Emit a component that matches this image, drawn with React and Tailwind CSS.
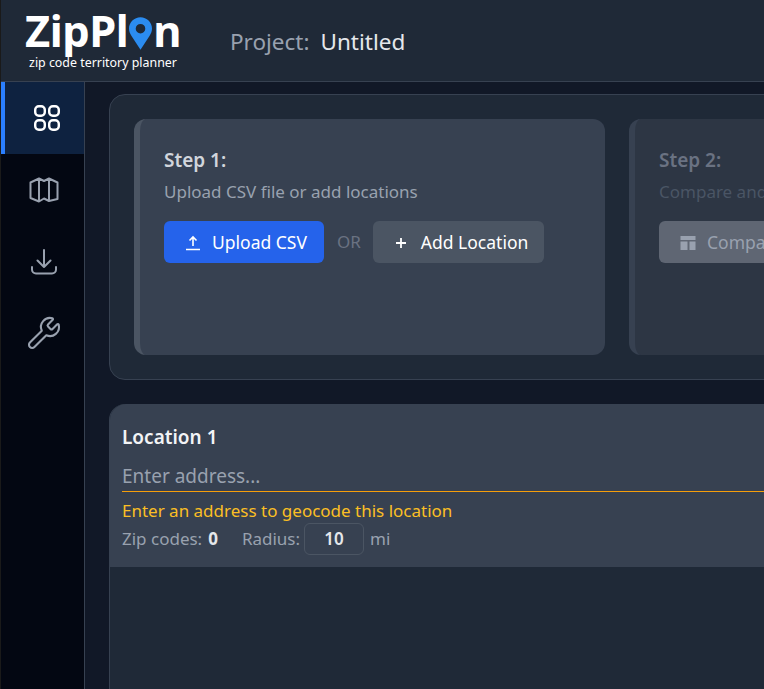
import { Wrench } from "lucide-react";

const font = { fontFamily: '"Noto Sans", "Open Sans", sans-serif' };

function GridIcon() {
  return (
    <svg viewBox="0 0 26 26" className="w-[26px] h-[26px]" fill="none" stroke="currentColor" strokeWidth="2.4">
      <rect x="1.2" y="1.2" width="9.6" height="9.6" rx="3.6" />
      <rect x="15.2" y="1.2" width="9.6" height="9.6" rx="3.6" />
      <rect x="1.2" y="15.2" width="9.6" height="9.6" rx="3.6" />
      <rect x="15.2" y="15.2" width="9.6" height="9.6" rx="3.6" />
    </svg>
  );
}

function MapIcon() {
  return (
    <svg viewBox="0 0 30 26" className="w-[30px] h-[26px]" fill="none" stroke="currentColor" strokeWidth="2" strokeLinejoin="round">
      <path d="M1.5 5.5 10 1.5l5 2.5 5-2.5 8.5 4V22L20 24l-5-2.5L10 24.5 1.5 21zM10 1.5v23M20 1.5V24" />
    </svg>
  );
}

function DownloadIcon() {
  return (
    <svg viewBox="0 0 26 26" className="w-[26px] h-[26px]" fill="none" stroke="currentColor" strokeWidth="2" strokeLinecap="round" strokeLinejoin="round">
      <path d="M13 1v17M6.5 11.5 13 18l6.5-6.5M1 18v2.5A4 4 0 005 24.5h16a4 4 0 004-4V18" />
    </svg>
  );
}

function Logo() {
  return (
    <div className="flex flex-col items-center w-[156px]">
      <div className="flex items-end h-[41px] text-white font-bold text-[43.5px] leading-[41px] tracking-[-0.5px]">
        <span>ZipPl</span>
        <svg viewBox="0 0 24 34" className="w-[23px] h-[33px] mb-[1px] mx-px">
          <path
            fill="#2b8cf0"
            fillRule="evenodd"
            d="M12 0C5.4 0 0 5.3 0 11.8c0 3 1 5.4 2.8 8L12 34l9.2-14.2c1.8-2.6 2.8-5 2.8-8C24 5.3 18.6 0 12 0zm0 7a5 5 0 110 10 5 5 0 010-10z"
          />
        </svg>
        <span>n</span>
      </div>
      <div className="text-white text-[12.4px] leading-[16px] mt-[4px]">zip code territory planner</div>
    </div>
  );
}

function NavItem({ children, active, className }) {
  const base = active
    ? "h-[72px] flex items-center justify-center border-l-4 border-blue-500 bg-[#0e2240] text-white "
    : "h-[72px] flex items-center justify-center border-l-4 border-transparent text-gray-400 ";
  return <div className={base + className}>{children}</div>;
}

function StepCard({ title, desc, dim, children }) {
  return (
    <div
      className={
        dim
          ? "w-[471px] h-[236px] shrink-0 rounded-xl border-l-[6px] border-[#374151] bg-[#2d3644] pl-[24px] pt-[28px]"
          : "w-[471px] h-[236px] shrink-0 rounded-xl border-l-[6px] border-[#4b5563] bg-[#374151] pl-[24px] pt-[28px]"
      }
    >
      <h3 className={dim ? "text-[19px] leading-[26px] font-semibold text-gray-500" : "text-[19px] leading-[26px] font-semibold text-gray-300"}>
        {title}
      </h3>
      <p className={dim ? "text-[17px] leading-[24px] mt-[7px] text-gray-600" : "text-[17px] leading-[24px] mt-[7px] text-gray-400"}>
        {desc}
      </p>
      <div className="flex items-center mt-[17px]">{children}</div>
    </div>
  );
}

export default function App() {
  return (
    <div style={font} className="w-[764px] h-[689px] overflow-hidden flex flex-col bg-[#111827] border-l border-[#1a1a1a]">
      <header className="h-[82px] shrink-0 flex items-center bg-[#1f2937] border-b border-[#374151] pl-[24px]">
        <Logo />
        <div className="flex items-center ml-[49px] text-[22.5px] mt-[2px]">
          <span className="text-gray-400">Project:</span>
          <span className="text-gray-200 ml-[11px]">Untitled</span>
        </div>
      </header>

      <div className="flex-1 flex min-h-0">
        <aside className="w-[84px] shrink-0 bg-[#030712] border-r border-[#374151]">
          <NavItem active className="pl-[4px]"><GridIcon /></NavItem>
          <NavItem className="pr-[1px]"><MapIcon /></NavItem>
          <NavItem className="pr-[2px]"><DownloadIcon /></NavItem>
          <NavItem className="pr-[1px] pb-[3px]"><Wrench size={36} strokeWidth={1.4} /></NavItem>
        </aside>

        <main className="flex-1 min-w-0 overflow-hidden pl-[24px] pt-[12px]">
          <section className="w-[1100px] h-[286px] flex gap-[24px] rounded-2xl border border-[#374151] bg-[#1f2937] pl-[24px] pt-[24px]">
            <StepCard title="Step 1:" desc="Upload CSV file or add locations">
              <button className="h-[42px] w-[160px] flex items-center gap-[11px] pl-[21px] pt-px rounded-md bg-[#2563eb] text-white text-[17.5px]">
                <svg viewBox="0 0 16 16" className="w-[16px] h-[16px]" fill="none" stroke="currentColor" strokeWidth="1.6">
                  <path d="M8 11V2M4.5 5.5 8 2l3.5 3.5M1 14.5h14" />
                </svg>
                Upload CSV
              </button>
              <span className="ml-[13px] mr-[12px] text-[17px] text-gray-500">OR</span>
              <button className="h-[42px] w-[171px] flex items-center gap-[14px] pl-[22px] pt-px rounded-md bg-[#4b5563] text-white text-[17.5px]">
                <svg viewBox="0 0 12 12" className="w-[12px] h-[12px]" fill="none" stroke="currentColor" strokeWidth="1.8">
                  <path d="M6 1v10M1 6h10" />
                </svg>
                Add Location
              </button>
            </StepCard>
            <StepCard dim title="Step 2:" desc="Compare and adjust territories">
              <button className="h-[42px] w-[190px] flex items-center gap-[11px] pl-[21px] pt-px rounded-md bg-[#5f6673] text-gray-400 text-[17.5px]">
                <svg viewBox="0 0 16 16" className="w-[16px] h-[16px]" fill="currentColor">
                  <rect x="0.5" y="1" width="15" height="4" />
                  <rect x="0.5" y="6.5" width="7" height="8.5" />
                  <rect x="9.5" y="6.5" width="6" height="8.5" />
                </svg>
                Compare
              </button>
            </StepCard>
          </section>

          <section className="w-[1100px] mt-[24px] h-[400px] rounded-t-2xl border-l border-[#374151] bg-[#1f2937]">
            <div className="h-[163px] rounded-tl-2xl bg-[#374151] pl-[12px] pt-[19px]">
              <h2 className="text-[19px] leading-[28px] font-semibold text-gray-100">Location 1</h2>
              <div className="h-[38px] mt-[3px] pb-[1px] border-b border-[#f59e0b] flex items-end text-[19px] leading-[28px] text-gray-400">
                Enter address...
              </div>
              <p className="text-[17px] leading-[24px] mt-[7px] text-[#fbbf24]">Enter an address to geocode this location</p>
              <div className="flex items-center text-[17px] text-gray-400">
                <span>Zip codes:</span>
                <span className="font-bold text-gray-200 ml-[6px]">0</span>
                <span className="ml-[24px]">Radius:</span>
                <div className="w-[60px] h-[32px] ml-[4px] flex items-center justify-center rounded-md border border-[#4b5563] bg-[#374151] font-semibold text-[17px] text-gray-200">
                  10
                </div>
                <span className="ml-[6px]">mi</span>
              </div>
            </div>
          </section>
        </main>
      </div>
    </div>
  );
}
